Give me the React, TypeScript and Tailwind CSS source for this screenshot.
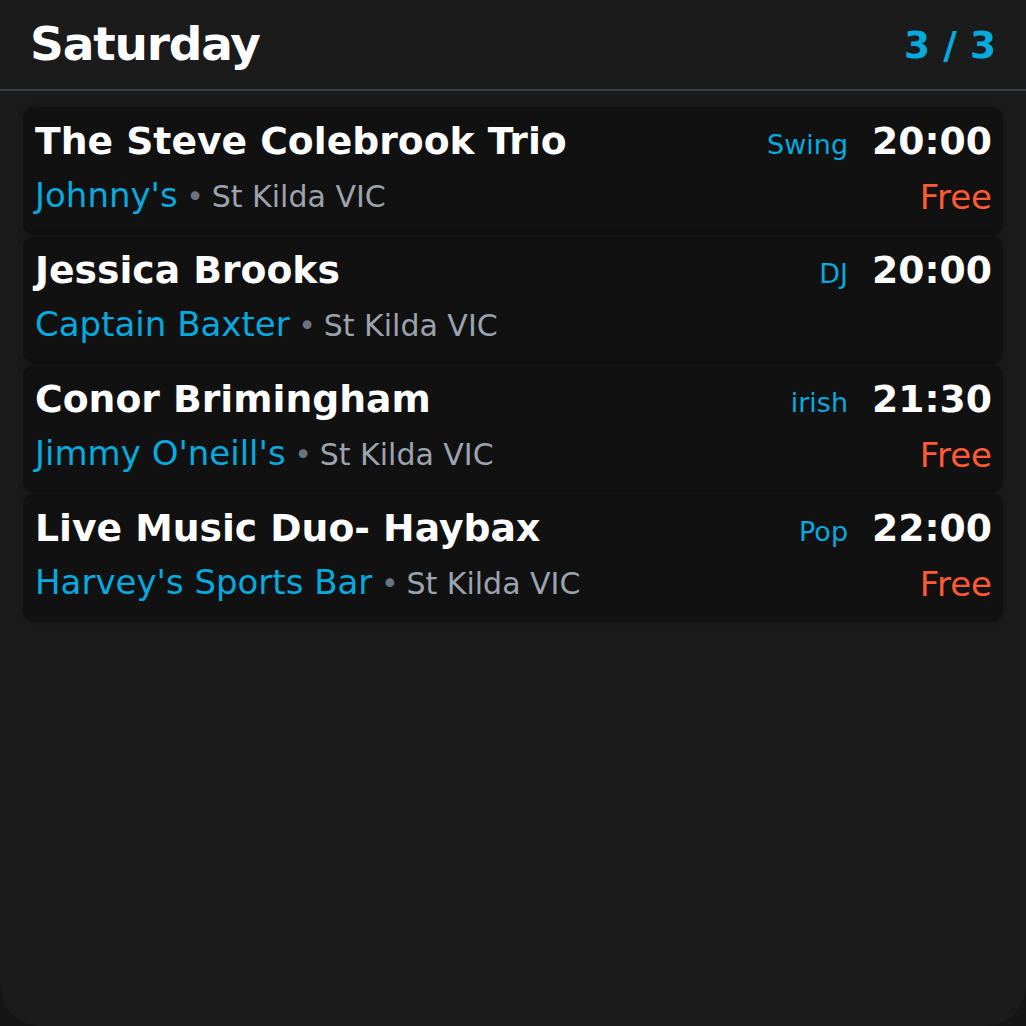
const gigs = [
  { title: 'The Steve Colebrook Trio', genre: 'Swing', time: '20:00', venue: "Johnny's", place: 'St Kilda VIC', price: 'Free' },
  { title: 'Jessica Brooks', genre: 'DJ', time: '20:00', venue: 'Captain Baxter', place: 'St Kilda VIC', price: '' },
  { title: 'Conor Brimingham', genre: 'irish', time: '21:30', venue: "Jimmy O'neill's", place: 'St Kilda VIC', price: 'Free' },
  { title: 'Live Music Duo- Haybax', genre: 'Pop', time: '22:00', venue: "Harvey's Sports Bar", place: 'St Kilda VIC', price: 'Free' },
];

function GigCard({ gig }: { gig: (typeof gigs)[number] }) {
  return (
    <div className="h-[128px] rounded-xl bg-[#111111] pl-3 pr-[11px] pt-3 shadow-[0_0_6px_rgba(0,0,0,0.25)]">
      <div className="flex items-baseline justify-between leading-[45px]">
        <span className="text-[37.7px] font-bold text-white">{gig.title}</span>
        <div className="flex items-baseline gap-[24px]">
          <span className="text-[27px] text-[#06aade]">{gig.genre}</span>
          <span className="text-[37.7px] font-bold text-white">{gig.time}</span>
        </div>
      </div>
      <div className="mt-[8px] flex items-start justify-between leading-[41px]">
        <div className="flex items-baseline">
          <span className="text-[34px] text-[#06aade]">{gig.venue}</span>
          <span className="whitespace-pre text-[30px] text-[#9ca3af]">
            <span className="text-[#6b7280] tracking-[-0.03em]"> • </span>
            {gig.place}
          </span>
        </div>
        {gig.price && <span className="pt-[2px] text-[34px] text-[#ff5a36]">{gig.price}</span>}
      </div>
    </div>
  );
}

export default function App() {
  return (
    <div className="min-h-screen bg-[#141414] font-['DejaVu_Sans',sans-serif]">
      <div className="flex h-[1026px] flex-col rounded-b-[40px] bg-[#1b1b1b]">
        <header className="flex h-[91px] items-center justify-between border-b-2 border-[#383d47] px-[30px]">
          <h1 className="text-[47px] font-bold tracking-[-0.025em] text-white">Saturday</h1>
          <span className="pt-[2px] text-[37.5px] font-bold text-[#06aade]">3 / 3</span>
        </header>
        <main className="flex flex-col gap-px px-[23px] pt-4">
          {gigs.map((g) => (
            <GigCard key={g.title} gig={g} />
          ))}
        </main>
      </div>
    </div>
  );
}
